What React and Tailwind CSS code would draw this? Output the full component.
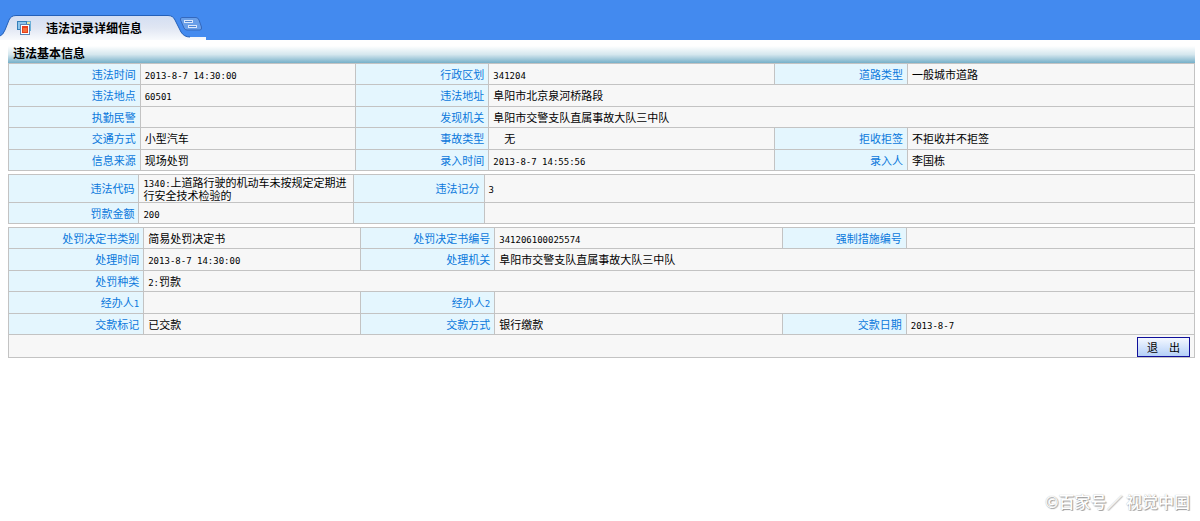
import React from "react";

const basicCols = ["w-[11.1%]", "w-[18.2%]", "w-[11.2%]", "w-[24.1%]", "w-[11.2%]", "w-[24.2%]"];
const codeCols = ["w-[11.0%]", "w-[18.1%]", "w-[11.0%]", "w-[59.9%]"];
const penaltyCols = ["w-[11.4%]", "w-[18.3%]", "w-[11.3%]", "w-[24.3%]", "w-[10.4%]", "w-[24.3%]"];

// Each cell is [label, value, colSpan of the value]
const basicRows = [
  [["违法时间", "2013-8-7 14:30:00"], ["行政区划", "341204"], ["道路类型", "一般城市道路"]],
  [["违法地点", "60501"], ["违法地址", "阜阳市北京泉河桥路段", 3]],
  [["执勤民警", ""], ["发现机关", "阜阳市交警支队直属事故大队三中队", 3]],
  [["交通方式", "小型汽车"], ["事故类型", "\u3000无"], ["拒收拒签", "不拒收并不拒签"]],
  [["信息来源", "现场处罚"], ["录入时间", "2013-8-7 14:55:56"], ["录入人", "李国栋"]],
];

const codeRows = [
  [["违法代码", "1340:上道路行驶的机动车未按规定定期进行安全技术检验的"], ["违法记分", "3"]],
  [["罚款金额", "200"], ["", ""]],
];

const penaltyRows = [
  [["处罚决定书类别", "简易处罚决定书"], ["处罚决定书编号", "341206100025574"], ["强制措施编号", ""]],
  [["处理时间", "2013-8-7 14:30:00"], ["处理机关", "阜阳市交警支队直属事故大队三中队", 3]],
  [["处罚种类", "2:罚款", 5]],
  [["经办人1", ""], ["经办人2", "", 3]],
  [["交款标记", "已交款"], ["交款方式", "银行缴款"], ["交款日期", "2013-8-7"]],
];

// Digits and dates are set smaller than the Chinese text
const Text = ({ children }) =>
  children.split(/([\x20-\x7e]+)/).map((part, i) =>
    /^[\x20-\x7e]+$/.test(part) ? (
      <span key={i} className="font-['DejaVu_Sans_Mono',monospace] text-[9px] leading-[0]">
        {part}
      </span>
    ) : (
      part
    )
  );

const InfoTable = ({ name, cols, rows, rowClass }) => (
  <table
    aria-label={name}
    className="w-full table-fixed border-collapse border border-[#c3c3c3] bg-[#f7f7f7] text-[11px] leading-[13px]"
  >
    <colgroup>
      {cols.map((width, i) => (
        <col key={i} className={width} />
      ))}
    </colgroup>
    <tbody>
      {rows.map((cells, r) => (
        <tr key={r} className={rowClass}>
          {cells.map(([label, value, span], c) => (
            <React.Fragment key={c}>
              <th
                scope="row"
                className="border border-[#c3c3c3] bg-[#e4f6fe] pr-1 text-right font-normal text-[#0a78dc]"
              >
                <Text>{label}</Text>
              </th>
              <td colSpan={span} className="border border-[#c3c3c3] px-1 text-black">
                <Text>{value}</Text>
              </td>
            </React.Fragment>
          ))}
        </tr>
      ))}
    </tbody>
  </table>
);

const TabShape = () => (
  <svg className="absolute bottom-0 left-0" width="206" height="25" viewBox="0 0 206 25" aria-hidden="true">
    <defs>
      <linearGradient id="tabFill" x1="0" y1="0" x2="0" y2="1">
        <stop offset="0" stopColor="#d3def2" />
        <stop offset="0.5" stopColor="#e0e6f3" />
        <stop offset="1" stopColor="#f8fafd" />
      </linearGradient>
    </defs>
    <path
      d="M0 25V21Q3 20 5 15L9 5Q11 .5 16 .5H168Q173 .5 175 5L181 17Q184 22 190 22H206V25Z"
      fill="url(#tabFill)"
    />
    <path
      d="M0 21Q3 20 5 15L9 5Q11 .5 16 .5H168Q173 .5 175 5L181 17Q184 22 190 22"
      fill="none"
      stroke="#2460b8"
    />
  </svg>
);

const WindowsIcon = () => (
  <svg width="16" height="16" viewBox="0 0 16 16" aria-hidden="true">
    <rect x="7.5" y="1.5" width="7" height="9" fill="#dfe6a8" stroke="#6db0d8" />
    <rect x="1.5" y="1.5" width="9" height="8" fill="#8cc4ec" stroke="#347fb9" />
    <rect x="4.5" y="4.5" width="9" height="10" fill="#fff" stroke="#5d86b5" />
    <rect x="6" y="6" width="6" height="7" fill="#e8401c" />
    <rect x="7" y="8" width="4" height="4" fill="#f4703c" />
  </svg>
);

const CascadeIcon = () => (
  <svg width="24" height="16" viewBox="0 0 24 16" aria-hidden="true">
    <path
      d="M3 1.5H17Q19 1.5 20 4L22.5 11Q23 14 21 14H8Q6 14 5 12L1.5 4Q1 1.5 3 1.5Z"
      fill="#6a9fe8"
      stroke="#3468bd"
    />
    <rect x="5.5" y="4.5" width="8" height="2" fill="#4b83d5" stroke="#dbe8fb" />
    <rect x="9.5" y="9.5" width="8" height="2" fill="#4b83d5" stroke="#dbe8fb" />
  </svg>
);

const App = () => {
  return (
    <div className="bg-white font-['Noto_Sans_CJK_SC',sans-serif] text-black">
      {/* Tab bar */}
      <header className="relative flex h-10 items-end bg-[#438aef]">
        <TabShape />
        <h1 className="relative flex h-6 w-[179px] items-center gap-3.5 pl-4 text-xs font-bold">
          <WindowsIcon />
          违法记录详细信息
        </h1>
        <button type="button" aria-label="窗口列表" className="relative mb-2">
          <CascadeIcon />
        </button>
      </header>

      <main className="pt-1.5 pr-[5px] pl-2">
        <h2 className="flex h-[17px] items-center bg-linear-to-b from-white via-[#d5e7ee] to-[#76b0c9] pb-1 pl-[5px] text-xs font-bold">
          违法基本信息
        </h2>

        <div className="flex flex-col gap-[3px]">
          <InfoTable name="违法基本信息" cols={basicCols} rows={basicRows} rowClass="h-[21px] even:h-[22px]" />
          <InfoTable name="违法代码" cols={codeCols} rows={codeRows} rowClass="h-[21px] first:h-7" />
          <InfoTable name="处罚信息" cols={penaltyCols} rows={penaltyRows} rowClass="h-[21px] even:h-[22px]" />
        </div>

        <div className="flex justify-end border border-t-0 border-[#c3c3c3] bg-[#f7f7f7] pt-0.5 pr-1">
          <button
            type="button"
            className="h-5 w-[53px] border border-[#10109a] bg-linear-to-b from-[#f4f8ff] to-[#b4d0f8] text-[11px] leading-4"
          >
            退{"\u3000"}出
          </button>
        </div>
      </main>

      <footer className="mt-[133px] flex justify-end pr-2.5 text-base leading-5 font-medium text-white [text-shadow:1px_1px_1px_#999,0_0_1px_#aaa]">
        ©百家号／ 视觉中国
      </footer>
    </div>
  );
};

export default App;
